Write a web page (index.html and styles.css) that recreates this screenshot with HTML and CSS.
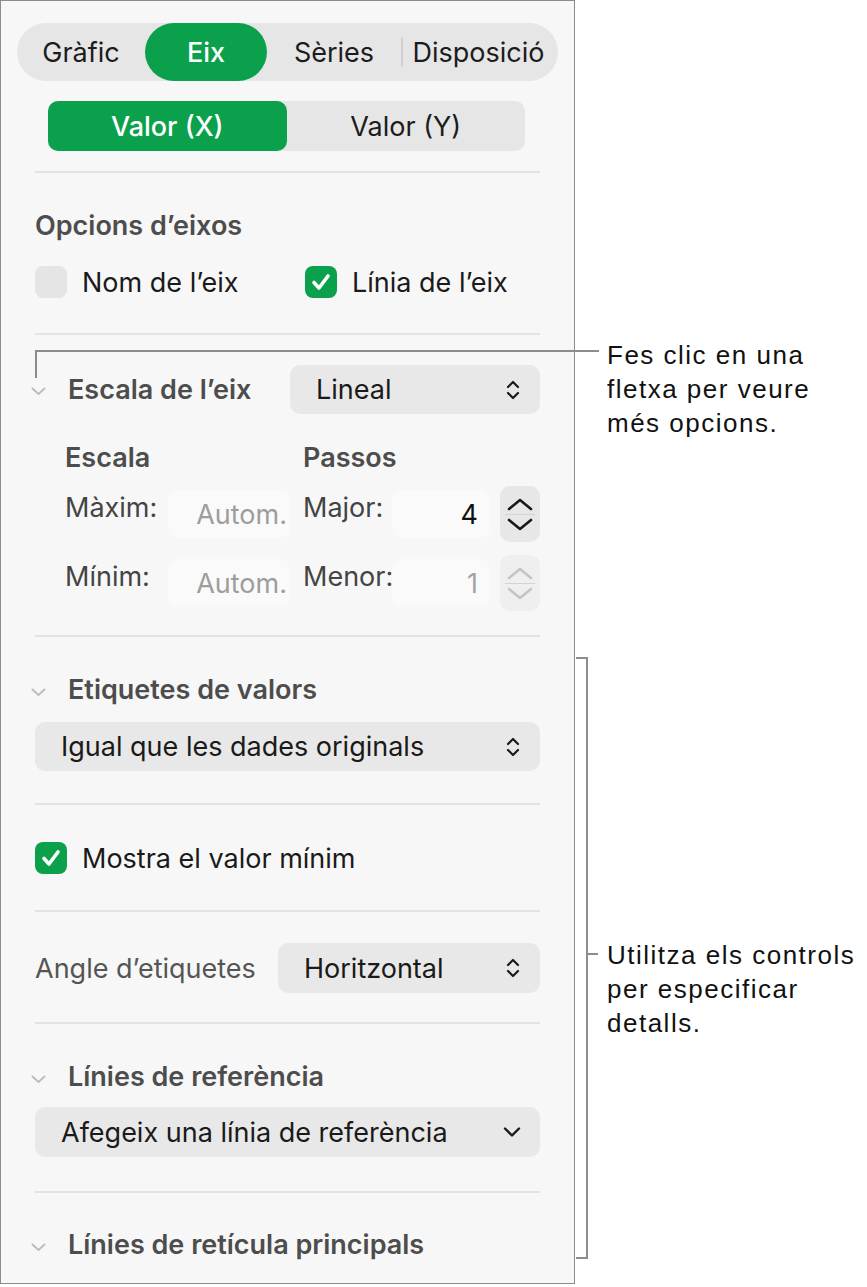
FILE: index.html
```html
<!DOCTYPE html>
<html lang="ca">
<head>
    <meta charset="UTF-8">
    <meta name="viewport" content="width=device-width, initial-scale=1.0">
    <title>Format - Eix</title>
    <link rel="stylesheet" href="styles.css">
</head>
<body>
    <div class="page">
        <div class="panel">
            <div class="tabs">
                <div class="tab tab-grafic">Gràfic</div>
                <div class="tab tab-eix active">Eix</div>
                <div class="tab tab-series">Sèries</div>
                <div class="tab-sep"></div>
                <div class="tab tab-disp">Disposició</div>
            </div>

            <div class="seg">
                <div class="seg-item active">Valor (X)</div>
                <div class="seg-item">Valor (Y)</div>
            </div>

            <div class="rule r1"></div>

            <div class="title plain t-opcions">Opcions d’eixos</div>
            <div class="checks">
                <label class="check check-first">
                    <span class="box"></span>
                    <span>Nom de l’eix</span>
                </label>
                <label class="check">
                    <span class="box on">
                        <svg width="32" height="32" viewBox="0 0 32 32"><path d="M9 16.5 L14 22 L23 10" fill="none" stroke="#fff" stroke-width="3.6" stroke-linecap="round" stroke-linejoin="round"/></svg>
                    </span>
                    <span>Línia de l’eix</span>
                </label>
            </div>

            <div class="rule r2"></div>

            <div class="row-head escala-row">
                <svg class="disc" width="15" height="9" viewBox="0 0 15 9"><path d="M1.5 1.5 L7.5 7 L13.5 1.5" fill="none" stroke="#bdbdbd" stroke-width="2" stroke-linecap="round" stroke-linejoin="round"/></svg>
                <span class="title">Escala de l’eix</span>
                <div class="popup popup-lineal">
                    <span>Lineal</span>
                    <svg width="14" height="24" viewBox="0 0 14 24"><path d="M2 9 L7 4 L12 9 M2 15 L7 20 L12 15" fill="none" stroke="#1a1a1a" stroke-width="2.2" stroke-linecap="round" stroke-linejoin="round"/></svg>
                </div>
            </div>

            <div class="scale-grid">
                <div class="title sg-h1">Escala</div>
                <div class="title sg-h2">Passos</div>

                <div class="sg-label">Màxim:</div>
                <div class="field placeholder">Autom.</div>
                <div class="sg-label sg-c4">Major:</div>
                <div class="field num">4</div>
                <div class="stepper">
                    <svg width="28" height="14" viewBox="0 0 28 14"><path d="M3 12 L14 3 L25 12" fill="none" stroke="#1a1a1a" stroke-width="2.6" stroke-linecap="round" stroke-linejoin="round"/></svg>
                    <span class="step-line"></span>
                    <svg width="28" height="14" viewBox="0 0 28 14"><path d="M3 2 L14 11 L25 2" fill="none" stroke="#1a1a1a" stroke-width="2.6" stroke-linecap="round" stroke-linejoin="round"/></svg>
                </div>

                <div class="sg-label">Mínim:</div>
                <div class="field placeholder">Autom.</div>
                <div class="sg-label sg-c4">Menor:</div>
                <div class="field num dim">1</div>
                <div class="stepper off">
                    <svg width="28" height="14" viewBox="0 0 28 14"><path d="M3 12 L14 3 L25 12" fill="none" stroke="#c4c4c4" stroke-width="2.4" stroke-linecap="round" stroke-linejoin="round"/></svg>
                    <span class="step-line"></span>
                    <svg width="28" height="14" viewBox="0 0 28 14"><path d="M3 2 L14 11 L25 2" fill="none" stroke="#c4c4c4" stroke-width="2.4" stroke-linecap="round" stroke-linejoin="round"/></svg>
                </div>
            </div>

            <div class="rule r3"></div>

            <div class="row-head t-etiq">
                <svg class="disc" width="15" height="9" viewBox="0 0 15 9"><path d="M1.5 1.5 L7.5 7 L13.5 1.5" fill="none" stroke="#bdbdbd" stroke-width="2" stroke-linecap="round" stroke-linejoin="round"/></svg>
                <span class="title">Etiquetes de valors</span>
            </div>
            <div class="popup wide p-igual">
                <span>Igual que les dades originals</span>
                <svg width="14" height="24" viewBox="0 0 14 24"><path d="M2 9 L7 4 L12 9 M2 15 L7 20 L12 15" fill="none" stroke="#1a1a1a" stroke-width="2.2" stroke-linecap="round" stroke-linejoin="round"/></svg>
            </div>

            <div class="rule r4"></div>

            <label class="check single">
                <span class="box on">
                    <svg width="32" height="32" viewBox="0 0 32 32"><path d="M9 16.5 L14 22 L23 10" fill="none" stroke="#fff" stroke-width="3.6" stroke-linecap="round" stroke-linejoin="round"/></svg>
                </span>
                <span>Mostra el valor mínim</span>
            </label>

            <div class="rule r5"></div>

            <div class="angle-row">
                <span class="angle-label">Angle d’etiquetes</span>
                <div class="popup popup-angle">
                    <span>Horitzontal</span>
                    <svg width="14" height="24" viewBox="0 0 14 24"><path d="M2 9 L7 4 L12 9 M2 15 L7 20 L12 15" fill="none" stroke="#1a1a1a" stroke-width="2.2" stroke-linecap="round" stroke-linejoin="round"/></svg>
                </div>
            </div>

            <div class="rule r6"></div>

            <div class="row-head t-ref">
                <svg class="disc" width="15" height="9" viewBox="0 0 15 9"><path d="M1.5 1.5 L7.5 7 L13.5 1.5" fill="none" stroke="#bdbdbd" stroke-width="2" stroke-linecap="round" stroke-linejoin="round"/></svg>
                <span class="title">Línies de referència</span>
            </div>
            <div class="popup wide p-afegeix">
                <span>Afegeix una línia de referència</span>
                <svg width="18" height="12" viewBox="0 0 18 12"><path d="M2 2.5 L9 9.5 L16 2.5" fill="none" stroke="#1a1a1a" stroke-width="2.4" stroke-linecap="round" stroke-linejoin="round"/></svg>
            </div>

            <div class="rule r7"></div>

            <div class="row-head t-ret">
                <svg class="disc" width="15" height="9" viewBox="0 0 15 9"><path d="M1.5 1.5 L7.5 7 L13.5 1.5" fill="none" stroke="#bdbdbd" stroke-width="2" stroke-linecap="round" stroke-linejoin="round"/></svg>
                <span class="title">Línies de retícula principals</span>
            </div>
        </div>

        <!-- anotacions sobre la captura -->
        <div class="callout-h"></div>
        <div class="callout-v"></div>
        <p class="note note-top">Fes clic en una<br>fletxa per veure<br>més opcions.</p>

        <div class="bracket"></div>
        <div class="bracket-tick"></div>
        <p class="note note-mid">Utilitza els controls<br>per especificar<br>detalls.</p>
    </div>
</body>
</html>
```

FILE: styles.css
```css
body {
    margin: 0;
    background: #fff;
    font-family: Inter, "Noto Sans", sans-serif;
    color: #1a1a1a;
}

.page {
    position: relative;
    width: 867px;
    height: 1287px;
    overflow: hidden;
}

.panel {
    box-sizing: border-box;
    width: 575px;
    height: 1284px;
    border: 1px solid #8c8c8c;
    background: #f7f7f7;
    padding: 22px 34px 0 34px;
    overflow: hidden;
    font-size: 27px;
}

/* onglets */
.tabs {
    display: flex;
    align-items: center;
    height: 58px;
    margin: 0 -18px;
    background: #e6e6e6;
    border-radius: 29px;
}

.tab {
    height: 58px;
    display: flex;
    align-items: center;
    justify-content: center;
    color: #1c1c1c;
}

.tab-grafic { width: 128px; }
.tab-eix { width: 122px; }
.tab-series { width: 134px; }
.tab-disp { flex: 1; padding-right: 4px; }

.tab.active {
    background: #0ba04b;
    color: #fff;
    border-radius: 29px;
    font-weight: 500;
}

.tab-sep {
    width: 2px;
    height: 30px;
    background: #cfcfcf;
}

.seg {
    display: flex;
    width: 477px;
    height: 50px;
    margin: 20px 0 0 13px;
    background: #e6e6e6;
    border-radius: 10px;
}

.seg-item {
    flex: 1;
    display: flex;
    align-items: center;
    justify-content: center;
    color: #1c1c1c;
}

.seg-item.active {
    background: #0ba04b;
    color: #fff;
    border-radius: 10px;
    font-weight: 500;
}

.rule {
    height: 2px;
    background: #e3e3e3;
}

.r1 { margin-top: 20px; }
.r2 { margin-top: 35px; }
.r3 { margin-top: 24px; }
.r4 { margin-top: 32px; }
.r5 { margin-top: 36px; }
.r6 { margin-top: 29px; }
.r7 { margin-top: 34px; }

.title {
    font-weight: 600;
    color: #4d4d4d;
    line-height: 30px;
}

.t-opcions { margin-top: 38px; }

.checks {
    display: flex;
    margin-top: 25px;
}

.check {
    display: flex;
    align-items: center;
    gap: 15px;
    height: 32px;
    color: #1a1a1a;
}

.check-first { width: 270px; }

.check.single {
    margin-top: 37px;
}

.box {
    width: 32px;
    height: 32px;
    border-radius: 8px;
    background: #e5e5e5;
    display: block;
}

.box.on {
    background: #0ba04b;
}

.box svg { display: block; }

/* capçaleres amb fletxa */
.row-head {
    display: flex;
    align-items: center;
    margin-left: -4px;
}

.disc {
    margin-right: 22px;
    margin-top: 4px;
    flex-shrink: 0;
}

.escala-row { margin-top: 30px; }
.t-etiq { margin-top: 38px; }
.t-ref { margin-top: 38px; }
.t-ret { margin-top: 37px; }

.popup {
    box-sizing: border-box;
    display: flex;
    align-items: center;
    justify-content: space-between;
    height: 50px;
    padding: 0 20px 0 26px;
    background: #e8e8e8;
    border-radius: 10px;
    color: #1a1a1a;
}

.popup svg { flex-shrink: 0; }

.popup-lineal {
    width: 250px;
    height: 49px;
    margin-left: auto;
}

.wide { width: 505px; }
.p-igual { margin-top: 17px; height: 49px; }
.p-afegeix { margin-top: 15px; padding-right: 19px; }

/* escala i passos */
.scale-grid {
    display: grid;
    grid-template-columns: 103px 122px 13px 89px 98px 10px 40px;
    grid-template-rows: 30px 56px 56px;
    row-gap: 13px;
    margin: 29px 0 0 30px;
}

.sg-h1 { grid-column: 1 / 3; }
.sg-h2 { grid-column: 4 / 8; }

.sg-label {
    grid-column: 1;
    color: #444;
    line-height: 30px;
    padding-top: 7px;
    white-space: nowrap;
}

.sg-c4 { grid-column: 4; }

.field {
    box-sizing: border-box;
    height: 48px;
    margin-top: 4px;
    display: flex;
    align-items: center;
    justify-content: flex-end;
    padding-right: 3px;
    background: #fafafa;
    border-radius: 10px;
}

.placeholder { color: #9d9d9d; }

.num {
    padding-right: 12px;
    color: #111;
}

.num.dim { color: #a3a3a3; }

.stepper {
    grid-column: 7;
    display: flex;
    flex-direction: column;
    align-items: center;
    justify-content: center;
    gap: 3px;
    background: #e7e7e7;
    border-radius: 10px;
}

.stepper.off { background: #efefef; }

.step-line {
    width: 30px;
    height: 1px;
    background: #d4d4d4;
}

.angle-row {
    display: flex;
    align-items: center;
    margin-top: 31px;
}

.angle-label {
    color: #555;
}

.popup-angle {
    width: 262px;
    margin-left: auto;
}

/* anotacions */
.callout-h {
    position: absolute;
    left: 35px;
    top: 350px;
    width: 564px;
    height: 2px;
    background: #8c8c8c;
}

.callout-v {
    position: absolute;
    left: 35px;
    top: 350px;
    width: 2px;
    height: 28px;
    background: #8c8c8c;
}

.note {
    position: absolute;
    left: 607px;
    margin: 0;
    font-family: "Liberation Sans", Arial, sans-serif;
    font-size: 26px;
    letter-spacing: 1.5px;
    line-height: 34px;
    color: #111;
    white-space: nowrap;
}

.note-top { top: 338px; }
.note-mid { top: 938px; }

.bracket {
    position: absolute;
    left: 576px;
    top: 657px;
    width: 10px;
    height: 598px;
    border: 2px solid #8c8c8c;
    border-left: none;
}

.bracket-tick {
    position: absolute;
    left: 588px;
    top: 953px;
    width: 10px;
    height: 2px;
    background: #8c8c8c;
}
```
